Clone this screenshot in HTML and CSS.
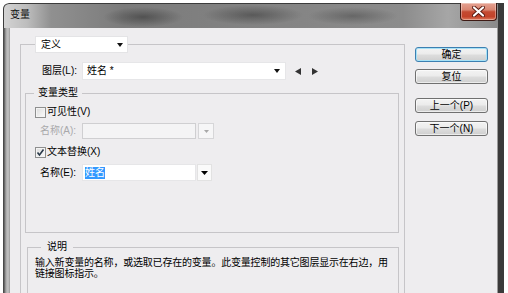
FILE: index.html
```html
<!DOCTYPE html>
<html lang="zh-CN">
<head>
<meta charset="utf-8">
<title>变量</title>
<link rel="stylesheet" href="styles.css">
</head>
<body>
<div class="window">
  <div class="titlebar">
    <span class="title">变量</span>
    <div class="close">
      <svg width="13" height="11" viewBox="0 0 13 11"><path d="M2 1.5L11 9.5M11 1.5L2 9.5" stroke="#5a1c12" stroke-width="4" stroke-linecap="round"/><path d="M2 1.5L11 9.5M11 1.5L2 9.5" stroke="#fff" stroke-width="2.2" stroke-linecap="round"/></svg>
    </div>
  </div>
  <div class="client">
    <fieldset class="grp-main">
      <legend class="combo-legend">
        <span class="combo">定义<svg class="arr" width="6" height="4" viewBox="0 0 6 4"><path d="M0 0H6L3 4Z"/></svg></span>
      </legend>
      <div class="layer-row">
        <span class="lbl">图层(L):</span>
        <span class="field layer-field"><span>姓名 *</span><svg class="arr" width="6" height="4" viewBox="0 0 6 4"><path d="M0 0H6L3 4Z"/></svg></span>
        <svg class="nav prev" width="6" height="7" viewBox="0 0 6 7"><path d="M6 0V7L0 3.5Z"/></svg>
        <svg class="nav next" width="6" height="7" viewBox="0 0 6 7"><path d="M0 0V7L6 3.5Z"/></svg>
      </div>
      <fieldset class="grp-type">
        <legend class="glegend type-legend">变量类型</legend>
        <div class="check-row row-vis">
          <span class="cb"></span><span>可见性(V)</span>
        </div>
        <div class="name-row row-a disabled">
          <span class="nlbl">名称(A):</span>
          <span class="field name-field"></span>
          <span class="dd"><svg width="5" height="3" viewBox="0 0 5 3"><path d="M0 0H5L2.5 3Z" fill="#a8a8a8"/></svg></span>
        </div>
        <div class="check-row row-txt">
          <span class="cb checked"><svg width="9" height="9" viewBox="0 0 9 9"><path d="M1.5 4.5L3.5 7L7.5 1.5" fill="none" stroke="#2a3a4a" stroke-width="1.6"/></svg></span><span>文本替换(X)</span>
        </div>
        <div class="name-row row-e">
          <span class="nlbl">名称(E):</span>
          <span class="field name-field on"><span class="sel">姓名</span></span>
          <span class="dd on"><svg width="7" height="4" viewBox="0 0 7 4"><path d="M0 0H7L3.5 4Z" fill="#000"/></svg></span>
        </div>
      </fieldset>
      <fieldset class="grp-desc">
        <legend class="glegend desc-legend">说明</legend>
        <p class="desc">输入新变量的名称，或选取已存在的变量。此变量控制的其它图层显示在右边，用链接图标指示。</p>
      </fieldset>
    </fieldset>
    <div class="buttons">
      <button class="btn default">确定</button>
      <button class="btn b-reset">复位</button>
      <button class="btn b-prev">上一个(P)</button>
      <button class="btn b-next">下一个(N)</button>
    </div>
  </div>
</div>
</body>
</html>
```
FILE: styles.css
```css
* { box-sizing: border-box; }
html, body { margin: 0; padding: 0; }
body {
  width: 508px;
  height: 293px;
  overflow: hidden;
  background: #ffffff;
  font-family: "Liberation Sans", "Noto Sans CJK SC", sans-serif;
  font-size: 10px;
  line-height: 12px;
  color: #000;
}
.window {
  margin: 3px 0 0 3px;
  width: 501px;
  height: 290px;
  overflow: hidden;
  display: flex;
  flex-direction: column;
  border-right: 6px solid #3a3a3a;
  border-radius: 6px 0 0 0;
  background: linear-gradient(to right, #3e3e3e 0, #555 1px, #a8a8a8 3px, #c4c4c4 5px, #9a9a9a 7px);
}
.titlebar {
  flex: 0 0 25px;
  height: 25px;
  display: flex;
  align-items: flex-start;
  border-radius: 6px 0 0 0;
  background:
    radial-gradient(ellipse 40px 10px at 140px 14px, rgba(40,40,40,.5), rgba(40,40,40,0)),
    radial-gradient(ellipse 50px 10px at 250px 12px, rgba(40,40,40,.45), rgba(40,40,40,0)),
    radial-gradient(ellipse 45px 9px at 350px 13px, rgba(40,40,40,.35), rgba(40,40,40,0)),
    linear-gradient(to right, #d4d4d4 0px, #bdbdbd 24px, #909090 48px, #7b7b7b 120px, #858585 300px, #8c8c8c 400px, #a6a6a6 445px, #8a8a8a 495px);
  box-shadow: inset 0 1px 0 #3c3c3c, inset 1px 0 0 #3c3c3c;
}
.title {
  margin: 6px 0 0 7px;
  color: #101010;
}
.close {
  margin-left: auto;
  margin-right: 1px;
  width: 37px;
  height: 18px;
  border: 1px solid #3e1a14;
  border-top: none;
  border-radius: 0 0 4px 4px;
  background: linear-gradient(#e6a393 0%, #d98672 40%, #c44a31 52%, #c3432a 80%, #de7a5c 100%);
  box-shadow: inset 0 0 0 1px rgba(255,255,255,.35);
  display: flex;
  align-items: center;
  justify-content: center;
}
.client {
  flex: 1 1 auto;
  min-height: 0;
  margin: 0 1px 0 7px;
  background: #eeedef;
  display: flex;
  align-items: flex-start;
  padding: 8px 0 0 10px;
}
fieldset {
  margin: 0;
  padding: 0;
  min-width: 0;
  border: 1px solid #c6c5c8;
}
legend { padding: 0; }
.grp-main {
  width: 385px;
  height: 257px;
  padding: 9px 0 0 0;
  border-bottom: none;
}
.combo-legend { margin-left: 14px; }
.combo {
  display: flex;
  align-items: center;
  width: 93px;
  height: 17px;
  background: #fff;
  border: 1px solid #e4e4e6;
  padding-left: 5px;
  line-height: 15px;
}
.arr { margin-left: auto; margin-right: 4px; fill: #111; }
.layer-row {
  display: flex;
  align-items: center;
  height: 18px;
  margin-left: 21px;
}
.lbl { width: 40px; white-space: nowrap; }
.field {
  display: flex;
  align-items: center;
  background: #fff;
  border: 1px solid #e6e6e8;
  height: 100%;
}
.layer-field {
  width: 204px;
  padding-left: 4px;
}
.layer-field .arr { margin-right: 5px; }
.nav { fill: #333; }
.prev { margin-left: 9px; }
.next { margin-left: 11px; }
.grp-type {
  margin: 7px 0 0 4px;
  width: 374px;
  padding: 6px 0 51px 0;
}
.glegend { padding: 0 4px; line-height: 12px; }
.type-legend { margin-left: 8px; }
.check-row {
  display: flex;
  align-items: center;
  height: 14px;
  padding-left: 9px;
}
.cb {
  width: 11px;
  height: 11px;
  border: 1px solid #8e8f8f;
  background: linear-gradient(135deg, #dcdcdc, #fbfbfb);
  box-shadow: inset 0 0 0 1px #f4f4f4;
  margin-right: 1px;
  display: flex;
  align-items: center;
  justify-content: center;
}
.name-row {
  display: flex;
  align-items: center;
  margin-left: 14px;
}
.nlbl { width: 42px; white-space: nowrap; }
.name-field { width: 114px; padding-left: 2px; }
.dd {
  width: 16px;
  height: 100%;
  margin-left: 2px;
  border: 1px solid #d6d6d8;
  background: #f6f6f7;
  display: flex;
  align-items: center;
  justify-content: center;
}
.row-a { height: 16px; margin-top: 4px; }
.row-a .nlbl { color: #a9a9ab; }
.row-a .name-field { background: #f4f4f5; border-color: #cfcfd1; }
.row-txt { margin-top: 6px; }
.row-e { height: 17px; margin-top: 5px; }
.row-e .dd { width: 15px; margin-left: 1px; background: #fafafa; border-color: #e2e2e2; }
.sel { background: #3399ff; color: #fff; line-height: 12px; }
.grp-desc {
  margin: 8px 0 0 6px;
  width: 372px;
  height: 52px;
  border-bottom: none;
}
.desc-legend { padding: 0 6px; margin-left: 13px; }
.desc {
  margin: 0;
  padding: 4px 0 0 7px;
  width: 363px;
  line-height: 11px;
  letter-spacing: -0.2px;
}
.buttons {
  display: flex;
  flex-direction: column;
  width: 73px;
  margin: 11px 0 0 10px;
}
.btn {
  height: 15px;
  padding: 0;
  font: inherit;
  line-height: 13px;
  color: #000;
  border: 1px solid #707070;
  border-radius: 3px;
  background: linear-gradient(#f3f3f3 0%, #ebebeb 48%, #dddddd 52%, #cfcfcf 100%);
  box-shadow: inset 0 0 0 1px rgba(255,255,255,.6);
}
.default {
  border-color: #3c7fb1;
  box-shadow: inset 0 0 0 1px #a6e1f6;
}
.b-reset { margin-top: 7px; }
.b-prev { margin-top: 14px; }
.b-next { margin-top: 8px; }
```
